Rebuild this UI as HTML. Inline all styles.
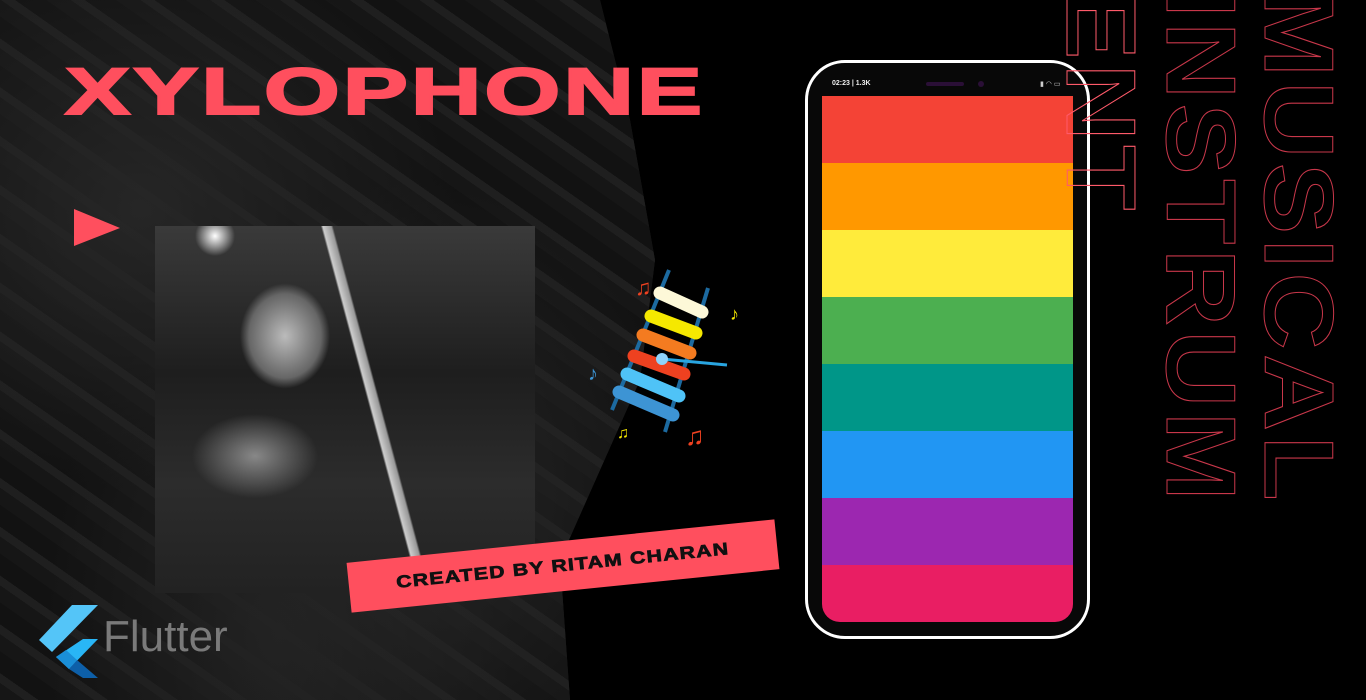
<!DOCTYPE html>
<html><head><meta charset="utf-8"><style>
body{margin:0;width:1366px;height:700px;overflow:hidden;background:#000;position:relative;font-family:"Liberation Sans",sans-serif}
.abs{position:absolute}
.tex{left:0;top:0;width:700px;height:700px;background:
radial-gradient(ellipse at 20% 30%,#262626,transparent 40%),
radial-gradient(ellipse at 60% 70%,#252525,transparent 45%),
radial-gradient(ellipse at 40% 90%,#222,transparent 40%),
repeating-linear-gradient(35deg,#161616 0 14px,#1f1f1f 14px 22px,#121212 22px 40px),
#181818;
clip-path:polygon(0 0,600px 0,630px 120px,655px 260px,640px 380px,600px 470px,560px 560px,570px 700px,0 700px)}
.title{left:65px;top:58px;color:#ff4f5e;font-weight:900;font-size:66px;letter-spacing:2px;transform:scaleX(1.48);transform-origin:left top;line-height:66px;-webkit-text-stroke:2px #ff4f5e}
.vert{writing-mode:vertical-rl;font-weight:bold;font-size:98px;color:transparent;-webkit-text-stroke:1px #c8374a;line-height:1;letter-spacing:4px;transform:scaleY(1.09);transform-origin:left top}
.photo{left:155px;top:226px;width:380px;height:367px;background:
radial-gradient(ellipse 60px 70px at 130px 110px,#bbb,#666 60%,transparent 75%),
radial-gradient(ellipse 90px 60px at 100px 230px,#888,transparent 70%),
radial-gradient(circle 20px at 60px 10px,#fff,transparent),
linear-gradient(75deg,transparent 255px,#ccc 257px,#999 265px,transparent 267px),
linear-gradient(180deg,#3a3a3a,#1e1e1e 40%,#2c2c2c 70%,#222)}
.phone{left:805px;top:60px;width:279px;height:573px;border:3px solid #fff;border-radius:40px;background:#080808}
.screen{left:822px;top:96px;width:251px;height:526px;border-radius:0 0 18px 18px;overflow:hidden}
.screen div{height:67px}
</style></head><body>
<div class="abs tex"></div>
<div class="abs title">XYLOPHONE</div>
<svg class="abs" style="left:74px;top:209px" width="47" height="38"><polygon points="0,0 46,19 0,37" fill="#ff4f5e"/></svg>
<div class="abs photo"></div>
<div class="abs" style="left:348px;top:541px;width:430px;height:50px;background:#ff4f5e;transform:rotate(-5.8deg);display:flex;align-items:center;justify-content:center">
<span style="font-weight:900;font-size:17px;letter-spacing:1px;color:#111;transform:scaleX(1.25);-webkit-text-stroke:0.7px #111">CREATED BY RITAM CHARAN</span></div>
<svg class="abs" style="left:580px;top:260px" width="160" height="200">
<line x1="89" y1="10" x2="32" y2="150" stroke="#1c6aa0" stroke-width="4"/>
<line x1="128" y1="28" x2="85" y2="172" stroke="#1c6aa0" stroke-width="4"/>
<g stroke-linecap="round" stroke-width="13">
<line x1="80" y1="33" x2="122" y2="52" stroke="#fdf8d8"/>
<line x1="71" y1="56" x2="116" y2="73" stroke="#f5e800"/>
<line x1="63" y1="75" x2="110" y2="93" stroke="#f47b20"/>
<line x1="54" y1="96" x2="104" y2="114" stroke="#ee4120"/>
<line x1="47" y1="114" x2="99" y2="136" stroke="#4fc3f7"/>
<line x1="39" y1="132" x2="93" y2="155" stroke="#3d94d4"/></g>
<line x1="82" y1="99" x2="147" y2="105" stroke="#29a5e0" stroke-width="3"/>
<circle cx="82" cy="99" r="6" fill="#8fd3fb"/>
<text x="55" y="35" fill="#ee4120" font-size="22">♫</text>
<text x="150" y="60" fill="#f5e800" font-size="18">♪</text>
<text x="8" y="120" fill="#3d94d4" font-size="20">♪</text>
<text x="105" y="185" fill="#ee4120" font-size="26">♫</text>
<text x="37" y="178" fill="#f5e800" font-size="16">♫</text>
</svg>
<div class="abs phone"></div>
<div class="abs" style="left:832px;top:80px;color:#eee;font-size:7px;font-weight:bold">02:23 | 1.3K</div>
<div class="abs" style="left:926px;top:82px;width:38px;height:4px;border-radius:2px;background:#2a0f36"></div>
<div class="abs" style="left:978px;top:81px;width:6px;height:6px;border-radius:3px;background:#2a0f36"></div>
<div class="abs" style="left:1040px;top:80px;color:#ccc;font-size:7px">▮ ◠ ▭</div>
<div class="abs screen">
<div style="background:#f44336"></div><div style="background:#ff9800"></div><div style="background:#ffeb3b"></div><div style="background:#4caf50"></div><div style="background:#009688"></div><div style="background:#2196f3"></div><div style="background:#9c27b0"></div><div style="background:#e91e63"></div></div>
<div class="abs vert" style="left:1250px;top:-12px">MUSICAL</div>
<div class="abs vert" style="left:1152px;top:-12px">INSTRUM</div>
<div class="abs vert" style="left:1052px;top:-12px;-webkit-text-stroke:1px #ff5a6a">ENT</div>
<svg class="abs" style="left:36px;top:602px" width="66" height="80">
<polygon points="62,3 36,3 3,38 16,50" fill="#54c5f8"/>
<polygon points="62,37 47,37 20,55 33,67" fill="#29b6f6"/>
<polygon points="33,67 47,76 62,76 41,58" fill="#0d5fa8"/>
<polygon points="20,55 33,67 41,58 30,48" fill="#1a8fd8"/>
</svg>
<div class="abs" style="left:103px;top:612px;color:#7a7a7a;font-size:44px">Flutter</div>
</body></html>
